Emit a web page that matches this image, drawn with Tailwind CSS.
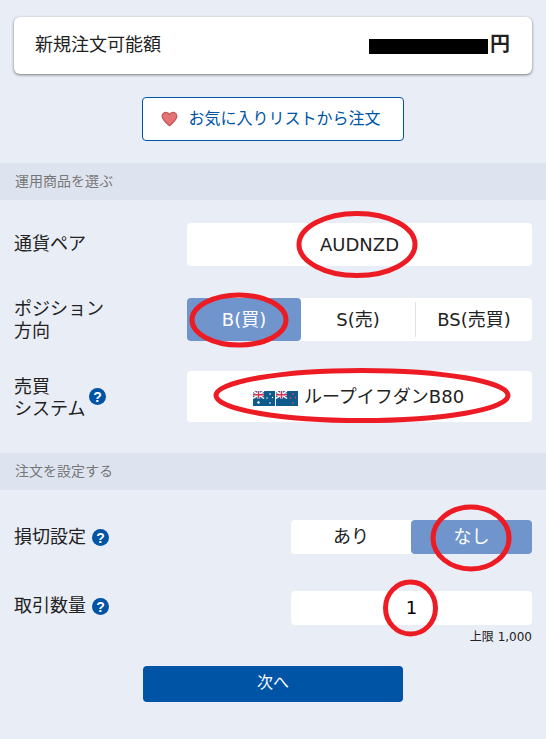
<!DOCTYPE html>
<html lang="ja">
<head>
<meta charset="utf-8">
<script src="https://cdn.jsdelivr.net/npm/@tailwindcss/browser@4"></script>
</head>
<body class="bg-[#e9edf5]">
<div class="relative w-[546px] h-[739px] overflow-hidden font-['DejaVu_Sans','Noto_Sans_CJK_JP',sans-serif] text-[#222] text-[18px] leading-[24px]">
  <div class="pt-[17px] px-[14px]">
    <div class="h-[57px] bg-white rounded-[6px] shadow-[0_1px_3px_rgba(0,0,0,0.5)] flex items-center justify-between pl-[21px] pr-[22px]">
      <span class="mt-[-2px]">新規注文可能額</span>
      <span class="flex items-center text-[20px] font-bold"><span class="block w-[119px] h-[15px] bg-black mr-[2px] mt-[2px]"></span><span class="mt-[-3px]">円</span></span>
    </div>
  </div>
  <div class="mt-[23px] flex justify-center">
    <div class="w-[262px] h-[44px] bg-white border border-[#0054a5] rounded-[4px] flex items-center justify-center gap-[10px] pr-[4px] text-[#0054a5] text-[16px]">
      <svg class="w-[17px] h-[16px]" viewBox="0 0 17 16"><path d="M8.5 14.6C5 11.8 1.2 9 1.2 5.3 1.2 3 3 1.4 5 1.4c1.500 0 2.800.8 3.500 2.200C9.200 2.200 10.500 1.400 12 1.400c2 0 3.800 1.600 3.800 3.900 0 3.700-3.800 6.500-7.300 9.300z" fill="#e57373" stroke="#c0595c" stroke-width="1.300"/></svg>
      <span>お気に入りリストから注文</span>
    </div>
  </div>
  <div class="mt-[22px] h-[37px] bg-[#dee4ef] flex items-center pl-[15px] text-[14px] text-[#777]"><span class="mt-[-1px]">運用商品を選ぶ</span></div>

  <div class="mt-[23px] flex items-center h-[43px] pl-[14px] pr-[14px]">
    <div class="w-[173px] mt-[-2px]">通貨ペア</div>
    <div class="w-[345px] h-full bg-white rounded-[4px] flex items-center justify-center">AUDNZD</div>
  </div>
  <div class="mt-[32px] flex items-center h-[43px] pl-[14px] pr-[14px]">
    <div class="w-[173px] leading-[22px]">ポジション<br>方向</div>
    <div class="w-[345px] h-full bg-white rounded-[4px] flex items-center">
      <div class="w-[114px] h-full bg-[#6f95cc] rounded-[4px] text-white flex items-center justify-center">B(買)</div>
      <div class="w-[115px] h-[35px] border-r border-[#dee4ef] flex items-center justify-center">S(売)</div>
      <div class="flex-1 flex items-center justify-center">BS(売買)</div>
    </div>
  </div>
  <div class="mt-[30px] flex items-center h-[51px] pl-[14px] pr-[14px]">
    <div class="w-[173px] flex items-center">
      <span class="leading-[22px] mt-[3px]">売買<br>システム</span>
      <svg class="ml-[4px] mt-[-1px] w-[17px] h-[17px]" viewBox="0 0 17 17"><circle cx="8.500" cy="8.500" r="8.500" fill="#0054a5"/><text x="8.500" y="13.500" text-anchor="middle" font-size="14" font-weight="700" fill="#fff" font-family="Liberation Sans">?</text></svg>
    </div>
    <div class="w-[345px] h-full bg-white rounded-[4px] flex items-center justify-center text-[18px] gap-[6px] pr-[2px]">
      <span class="flex gap-px mt-[3px]">
        <svg class="w-[22px] h-[15px]" viewBox="0 0 22 15"><rect width="22" height="15" fill="#0d5a8c"/><rect width="11" height="7.500" fill="#3f5f99"/><path d="M0 0L11 7.500M11 0L0 7.500" stroke="#fff" stroke-width="1.500"/><path d="M5.500 0V7.500M0 3.750H11" stroke="#fff" stroke-width="2.500"/><path d="M5.500 0V7.500M0 3.750H11" stroke="#d6304a" stroke-width="1.300"/><circle cx="5.500" cy="11.500" r="1.200" fill="#fff"/><circle cx="17" cy="3" r=".8" fill="#fff"/><circle cx="14" cy="7" r=".7" fill="#fff"/><circle cx="19.500" cy="6.500" r=".7" fill="#fff"/><circle cx="17" cy="12" r=".8" fill="#fff"/></svg>
        <svg class="w-[22px] h-[15px]" viewBox="0 0 22 15"><rect width="22" height="15" fill="#0d5a8c"/><rect width="11" height="7.500" fill="#3f5f99"/><path d="M0 0L11 7.500M11 0L0 7.500" stroke="#fff" stroke-width="1.500"/><path d="M5.500 0V7.500M0 3.750H11" stroke="#fff" stroke-width="2.500"/><path d="M5.500 0V7.500M0 3.750H11" stroke="#d6304a" stroke-width="1.300"/><circle cx="17" cy="3" r=".9" fill="#c9485b"/><circle cx="14.500" cy="7" r=".9" fill="#c9485b"/><circle cx="19.500" cy="6.500" r=".9" fill="#c9485b"/><circle cx="17" cy="12" r=".9" fill="#c9485b"/></svg>
      </span>
      <span>ループイフダンB80</span>
    </div>
  </div>

  <div class="mt-[31px] h-[37px] bg-[#dee4ef] flex items-center pl-[15px] text-[14px] text-[#777]"><span class="mt-[-1px]">注文を設定する</span></div>

  <div class="mt-[30px] flex items-center justify-between h-[34px] pl-[14px] pr-[14px]">
    <div class="flex items-center gap-[6px]"><span class="mt-[-1px]">損切設定</span>
      <svg class="w-[17px] h-[17px]" viewBox="0 0 17 17"><circle cx="8.500" cy="8.500" r="8.500" fill="#0054a5"/><text x="8.500" y="13.500" text-anchor="middle" font-size="14" font-weight="700" fill="#fff" font-family="Liberation Sans">?</text></svg>
    </div>
    <div class="w-[241px] h-full bg-white rounded-[4px] flex">
      <div class="w-[120px] flex items-center justify-center text-[18px]">あり</div>
      <div class="flex-1 bg-[#6f95cc] rounded-[4px] text-white flex items-center justify-center">なし</div>
    </div>
  </div>
  <div class="mt-[37px] flex items-center justify-between h-[34px] pl-[14px] pr-[14px]">
    <div class="flex items-center gap-[6px] mt-[-4px]"><span>取引数量</span>
      <svg class="w-[17px] h-[17px]" viewBox="0 0 17 17"><circle cx="8.500" cy="8.500" r="8.500" fill="#0054a5"/><text x="8.500" y="13.500" text-anchor="middle" font-size="14" font-weight="700" fill="#fff" font-family="Liberation Sans">?</text></svg>
    </div>
    <div class="w-[241px] h-full bg-white rounded-[4px] flex items-center justify-center text-[#000]">1</div>
  </div>
  <div class="pr-[14px] text-right text-[12px] leading-[20px] mt-[2px]">上限 1,000</div>
  <div class="mt-[19px] flex justify-center">
    <div class="w-[260px] h-[36px] bg-[#0054a5] rounded-[4px] text-white text-[16px] pb-[2px] flex items-center justify-center">次へ</div>
  </div>

  <svg class="absolute inset-0 pointer-events-none" width="546" height="739" viewBox="0 0 546 739" fill="none" stroke="#ed1c24" stroke-width="5">
    <ellipse cx="357" cy="244.500" rx="58" ry="31"/>
    <ellipse cx="239" cy="320" rx="47" ry="25"/>
    <ellipse cx="362" cy="395.500" rx="146" ry="25"/>
    <ellipse cx="471" cy="538" rx="38" ry="31"/>
    <ellipse cx="410.500" cy="608" rx="25" ry="26"/>
  </svg>
</div>
</body>
</html>
